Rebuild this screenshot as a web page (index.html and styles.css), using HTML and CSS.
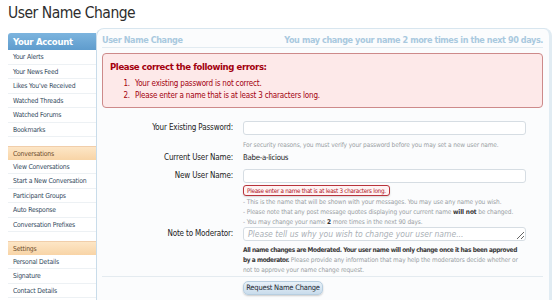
FILE: index.html
```html
<!DOCTYPE html>
<html lang="en">
<head>
<meta charset="utf-8">
<title>User Name Change</title>
<link rel="stylesheet" href="styles.css">
</head>
<body>
<h1 class="page-title">User Name Change</h1>
<div class="layout">
  <nav class="sidebar">
    <div class="side-head side-head-blue">Your Account</div>
    <ul class="side-list">
      <li>Your Alerts</li>
      <li>Your News Feed</li>
      <li>Likes You've Received</li>
      <li>Watched Threads</li>
      <li>Watched Forums</li>
      <li>Bookmarks</li>
    </ul>
    <div class="side-head side-head-peach">Conversations</div>
    <ul class="side-list">
      <li>View Conversations</li>
      <li>Start a New Conversation</li>
      <li>Participant Groups</li>
      <li>Auto Response</li>
      <li>Conversation Prefixes</li>
    </ul>
    <div class="side-head side-head-peach">Settings</div>
    <ul class="side-list">
      <li>Personal Details</li>
      <li>Signature</li>
      <li>Contact Details</li>
    </ul>
  </nav>
  <main class="panel">
    <div class="subhead">
      <span>User Name Change</span>
      <span>You may change your name 2 more times in the next 90 days.</span>
    </div>
    <div class="errors">
      <div class="errors-title">Please correct the following errors:</div>
      <ol class="errors-list">
        <li>Your existing password is not correct.</li>
        <li>Please enter a name that is at least 3 characters long.</li>
      </ol>
    </div>
    <form class="form">
      <div class="row row-pass">
        <label class="label">Your Existing Password:</label>
        <div class="control">
          <input class="input" type="password">
          <p class="hint hint-pass">For security reasons, you must verify your password before you may set a new user name.</p>
        </div>
      </div>
      <div class="row row-current">
        <span class="label">Current User Name:</span>
        <div class="control"><span class="value">Babe-a-licious</span></div>
      </div>
      <div class="row row-new">
        <label class="label">New User Name:</label>
        <div class="control">
          <input class="input" type="text">
          <div class="field-error">Please enter a name that is at least 3 characters long.</div>
          <p class="hint hint-list">- This is the name that will be shown with your messages. You may use any name you wish.<br>- Please note that any post message quotes displaying your current name <b>will not</b> be changed.<br>- You may change your name <b>2</b> more times in the next 90 days.</p>
        </div>
      </div>
      <div class="row row-note">
        <label class="label">Note to Moderator:</label>
        <div class="control">
          <textarea class="textarea" placeholder="Please tell us why you wish to change your user name..."></textarea>
          <p class="hint hint-note"><b>All name changes are Moderated. Your user name will only change once it has been approved<br>by a moderator.</b> Please provide any information that may help the moderators decide whether or<br>not to approve your name change request.</p>
        </div>
      </div>
      <div class="submit-row">
        <button class="button" type="button">Request Name Change</button>
      </div>
    </form>
  </main>
</div>
</body>
</html>
```

FILE: styles.css
```css
* { box-sizing: border-box; }
html, body { margin: 0; padding: 0; background: #fff; }
body {
  font-family: "DejaVu Sans Condensed", "DejaVu Sans", sans-serif;
  color: #222;
  width: 558px;
  height: 300px;
  overflow: hidden;
}
.page-title {
  margin: 0;
  padding: 3px 0 0 8px;
  height: 28px;
  font-size: 15.5px;
  letter-spacing: -0.5px;
  line-height: 20px;
  font-weight: normal;
  color: #2d2d2d;
}
.layout {
  display: flex;
  align-items: flex-start;
}
.sidebar {
  width: 96px;
  padding-left: 8px;
  margin-top: 5px;
  flex: none;
}
.side-head {
  padding-left: 5px;
  white-space: nowrap;
}
.side-head-blue {
  height: 17px;
  line-height: 17px;
  font-size: 9.5px;
  letter-spacing: -0.3px;
  font-weight: bold;
  color: #fff;
  background: linear-gradient(#7cb4de, #5f9ccd);
  border-radius: 3px 0 0 0;
}
.side-head-peach {
  margin-top: 8.5px;
  height: 14px;
  line-height: 14px;
  font-size: 6.8px;
  letter-spacing: -0.2px;
  color: #6d4c2c;
  background: linear-gradient(#fde6c6, #f8d4a6);
  border-top: 1px solid #f1ceaa;
}
.side-list {
  list-style: none;
  margin: 0;
  padding: 0;
}
.side-list li {
  height: 14.5px;
  line-height: 14px;
  font-size: 6.8px;
  letter-spacing: -0.2px;
  white-space: nowrap;
  color: #33495d;
  padding-left: 5px;
  border-bottom: 1px solid #edf1f4;
}
.panel {
  flex: 1;
  margin-right: 6px;
  height: 280px;
  border-top: 1px solid #d8e6ef;
  border-left: 1px solid #c9dcea;
  border-right: 3px solid #e1ecf3;
  border-radius: 8px 8px 0 0;
  background: #fbfcfd;
  padding: 4px 6px 0 5px;
}
.subhead {
  display: flex;
  justify-content: space-between;
  height: 15px;
  line-height: 14px;
  font-size: 9px;
  letter-spacing: -0.4px;
  font-weight: bold;
  color: #a9c9df;
  border-bottom: 1px solid #e2ebf1;
}
.errors {
  margin-top: 5px;
  height: 55px;
  border: 1px solid #cd8a8a;
  border-radius: 4px;
  background: #fde9e9;
  padding: 6px 0 0 7px;
  color: #a3000e;
}
.errors-title {
  font-size: 9.5px;
  letter-spacing: -0.4px;
  font-weight: bold;
  line-height: 13px;
}
.errors-list {
  margin: 5px 0 0 0;
  padding-left: 22px;
  font-size: 8px;
  letter-spacing: -0.2px;
  line-height: 12px;
}
.errors-list li { padding-left: 3px; }
.form {
  margin: 0;
}
.row {
  display: flex;
  align-items: flex-start;
}
.label {
  width: 131px;
  flex: none;
  text-align: right;
  font-size: 8px;
  letter-spacing: -0.15px;
  line-height: 14px;
  color: #222;
}
.control {
  margin-left: 10px;
  flex: 1;
  min-width: 0;
  display: flex;
  flex-direction: column;
  align-items: flex-start;
}
.row-pass { margin-top: 13px; }
.row-current { margin-top: 1px; }
.row-new { margin-top: 4px; }
.row-note { margin-top: 0; }
.input, .textarea {
  display: block;
  width: 283px;
  height: 14px;
  margin: 0;
  border: 1px solid #d6dde3;
  border-radius: 3px;
  background: #fff;
  padding: 0 4px;
  font-family: inherit;
}
.textarea {
  resize: vertical;
  font-size: 8.5px;
  line-height: 12px;
  font-style: italic;
  padding: 0 4px;
  overflow: hidden;
}
.textarea::placeholder { color: #aab0b6; }
.value {
  display: block;
  font-size: 7.8px;
  letter-spacing: -0.3px;
  line-height: 14px;
  color: #222;
}
.hint {
  margin: 0;
  font-size: 6.5px;
  letter-spacing: -0.12px;
  line-height: 10px;
  color: #9a9fa4;
  white-space: nowrap;
}
.hint b { color: #333; }
.hint-pass { margin-top: 5px; }
.hint-list { margin-top: 1px; }
.hint-note { margin-top: 4px; }
.hint-note b { letter-spacing: -0.4px; color: #3a3a3a; }
.field-error {
  margin-top: 2px;
  height: 11px;
  line-height: 9px;
  padding: 0 3px;
  font-size: 6.3px;
  letter-spacing: -0.28px;
  white-space: nowrap;
  color: #b0101a;
  background: #fff3f3;
  border: 1px solid #b8333b;
  border-radius: 3px;
  box-shadow: 0 1px 2px rgba(0,0,0,0.15);
}
.submit-row {
  margin-top: 1px;
  border-top: 1px solid #e4ebf0;
  padding: 4px 0 0 141px;
}
.button {
  display: block;
  width: 80px;
  height: 14px;
  padding: 0;
  font-family: inherit;
  font-size: 7.5px;
  letter-spacing: -0.2px;
  line-height: 12px;
  white-space: nowrap;
  color: #1f2a33;
  background: linear-gradient(#e8f1f8, #c9dcec);
  border: 1px solid #b7cee0;
  border-radius: 5px;
  box-shadow: 0 1px 2px rgba(0,0,0,0.2);
}
```
